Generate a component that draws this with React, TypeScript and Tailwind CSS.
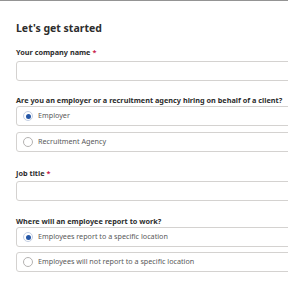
import React from "react";

function Radio({ label, checked }: { label: string; checked?: boolean }) {
  return (
    <div className="flex h-[20px] items-center rounded-[3px] border border-[#d4d2d0] pl-[6px]">
      {checked ? (
        <span className="flex h-[10px] w-[10px] items-center justify-center rounded-full border border-[#c4cfe3] bg-white">
          <span className="h-[5px] w-[5px] rounded-full bg-[#2557a7]" />
        </span>
      ) : (
        <span className="h-[10px] w-[10px] rounded-full border border-[#b4b2b1] bg-white" />
      )}
      <span className="ml-[5px] text-[7.2px] leading-none text-[#595959]">{label}</span>
    </div>
  );
}

export default function App() {
  return (
    <div
      className="h-[288px] w-[288px] overflow-hidden border-t border-[#949494] bg-white"
      style={{ fontFamily: '"Noto Sans", sans-serif' }}
    >
      <div className="w-[320px] pl-[16px]">
        <h1 className="mt-[19px] text-[10.5px] font-bold leading-[16px] text-[#2d2d2d]">Let's get started</h1>
        <div className="mt-[11px] text-[7.3px] font-bold leading-[10px] text-[#2d2d2d]">
          Your company name <span className="text-[#c91c4c]">*</span>
        </div>
        <div className="mt-[4px] h-[20px] rounded-[3px] border border-[#d4d2d0]" />
        <div className="mt-[14px] text-[7.3px] font-bold leading-[10px] text-[#2d2d2d]">
          Are you an employer or a recruitment agency hiring on behalf of a client?
        </div>
        <div className="mt-[1px] flex flex-col gap-[6px]">
          <Radio label="Employer" checked />
          <Radio label="Recruitment Agency" />
        </div>
        <div className="mt-[16px] text-[7.3px] font-bold leading-[10px] text-[#2d2d2d]">
          Job title <span className="text-[#c91c4c]">*</span>
        </div>
        <div className="mt-[3px] h-[20px] rounded-[3px] border border-[#d4d2d0]" />
        <div className="mt-[15px] text-[7.3px] font-bold leading-[10px] text-[#2d2d2d]">
          Where will an employee report to work?
        </div>
        <div className="mt-[1px] flex flex-col gap-[5px]">
          <Radio label="Employees report to a specific location" checked />
          <Radio label="Employees will not report to a specific location" />
        </div>
      </div>
    </div>
  );
}
